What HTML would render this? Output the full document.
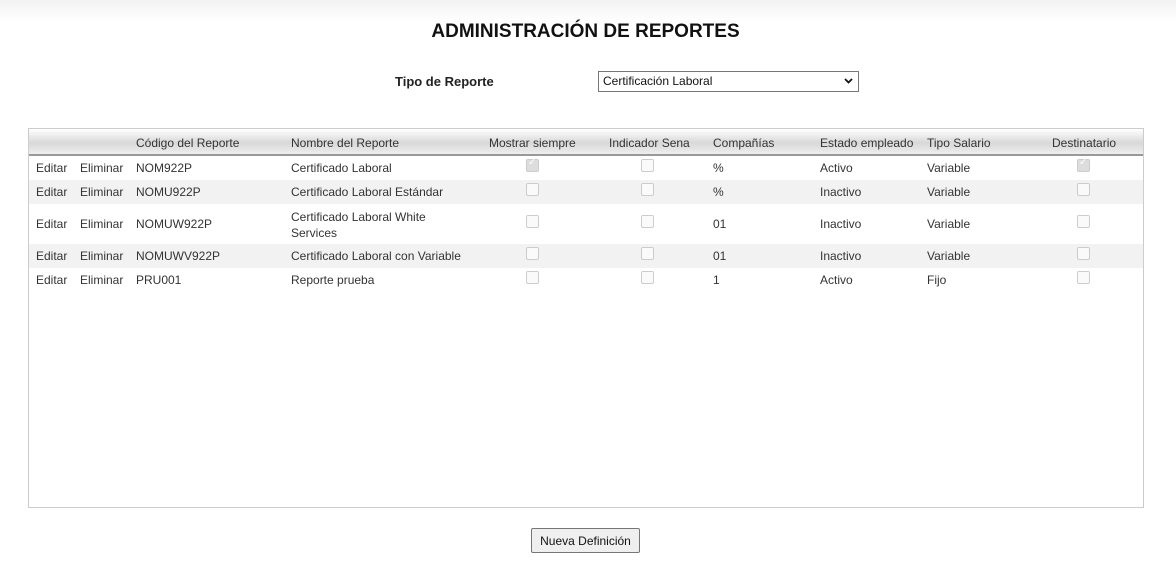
<!DOCTYPE html>
<html><head><meta charset="utf-8"><style>
body{margin:0;width:1176px;height:565px;background:#fff;font-family:"Liberation Sans",sans-serif;color:#333;position:relative;overflow:hidden}
.topg{position:absolute;left:0;top:0;width:1176px;height:22px;background:linear-gradient(#f2f2f2,#fff)}
.a{position:absolute;white-space:nowrap}
h1{position:absolute;left:0;width:1171px;top:21px;margin:0;text-align:center;font-size:19px;font-weight:bold;color:#111}
.box{position:absolute;left:28px;top:128px;width:1114px;height:378px;border:1px solid #ccc}
.hdr{position:absolute;left:0;top:0;width:1114px;height:25px;background:linear-gradient(#fff,#d8d8d8 55%,#eee);border-bottom:2px solid #999}
.row{position:absolute;left:0;width:1114px}
.g{background:#f2f2f2}
.c{position:absolute;font-size:12px;line-height:15px}
.cb{position:absolute;width:11px;height:11px;border:1px solid #ccc;border-radius:2px;background:#fafafa}
.cb.k{background:#ddd;border-color:#ccc}
.cb.k:after{content:"✓";position:absolute;left:1px;top:-3px;font-size:10px;color:#fff}
</style></head><body>
<div class="topg"></div>
<h1>ADMINISTRACIÓN DE REPORTES</h1>
<div class="a" style="left:395px;top:74px;font-size:13px;font-weight:bold;color:#222">Tipo de Reporte</div>
<div class="a" style="left:598px;top:71px;width:259px;height:19px;border:1px solid #767676;font-size:12px;line-height:19px;color:#111"><span style="margin-left:4px">Certificación Laboral</span><svg style="position:absolute;right:5px;top:6px" width="9" height="6" viewBox="0 0 9 6"><path d="M1 1L4.5 4.5L8 1" stroke="#111" stroke-width="1.8" fill="none"/></svg></div>
<div class="box">
<div class="hdr">
<div class="c" style="left:107px;top:7px">Código del Reporte</div>
<div class="c" style="left:262px;top:7px">Nombre del Reporte</div>
<div class="c" style="left:460px;top:7px">Mostrar siempre</div>
<div class="c" style="left:580px;top:7px">Indicador Sena</div>
<div class="c" style="left:684px;top:7px">Compañías</div>
<div class="c" style="left:791px;top:7px">Estado empleado</div>
<div class="c" style="left:898px;top:7px">Tipo Salario</div>
<div class="c" style="left:1023px;top:7px">Destinatario</div>
</div>
<div class="row" style="top:27px;height:24px">
<div class="c" style="left:7px;top:5px">Editar</div><div class="c" style="left:51px;top:5px">Eliminar</div><div class="c" style="left:107px;top:5px">NOM922P</div><div class="c" style="left:262px;top:5px">Certificado Laboral</div>
<div class="cb k" style="left:497px;top:3px"></div><div class="cb" style="left:612px;top:3px"></div>
<div class="c" style="left:684px;top:5px">%</div><div class="c" style="left:791px;top:5px">Activo</div><div class="c" style="left:898px;top:5px">Variable</div><div class="cb k" style="left:1048px;top:3px"></div></div>
<div class="row g" style="top:51px;height:24px">
<div class="c" style="left:7px;top:5px">Editar</div><div class="c" style="left:51px;top:5px">Eliminar</div><div class="c" style="left:107px;top:5px">NOMU922P</div><div class="c" style="left:262px;top:5px">Certificado Laboral Estándar</div>
<div class="cb" style="left:497px;top:3px"></div><div class="cb" style="left:612px;top:3px"></div>
<div class="c" style="left:684px;top:5px">%</div><div class="c" style="left:791px;top:5px">Inactivo</div><div class="c" style="left:898px;top:5px">Variable</div><div class="cb" style="left:1048px;top:3px"></div></div>
<div class="row" style="top:75px;height:40px">
<div class="c" style="left:7px;top:13px">Editar</div><div class="c" style="left:51px;top:13px">Eliminar</div><div class="c" style="left:107px;top:13px">NOMUW922P</div><div class="c" style="left:262px;top:5px;line-height:16px">Certificado Laboral White<br>Services</div>
<div class="cb" style="left:497px;top:11px"></div><div class="cb" style="left:612px;top:11px"></div>
<div class="c" style="left:684px;top:13px">01</div><div class="c" style="left:791px;top:13px">Inactivo</div><div class="c" style="left:898px;top:13px">Variable</div><div class="cb" style="left:1048px;top:11px"></div></div>
<div class="row g" style="top:115px;height:24px">
<div class="c" style="left:7px;top:5px">Editar</div><div class="c" style="left:51px;top:5px">Eliminar</div><div class="c" style="left:107px;top:5px">NOMUWV922P</div><div class="c" style="left:262px;top:5px">Certificado Laboral con Variable</div>
<div class="cb" style="left:497px;top:3px"></div><div class="cb" style="left:612px;top:3px"></div>
<div class="c" style="left:684px;top:5px">01</div><div class="c" style="left:791px;top:5px">Inactivo</div><div class="c" style="left:898px;top:5px">Variable</div><div class="cb" style="left:1048px;top:3px"></div></div>
<div class="row" style="top:139px;height:24px">
<div class="c" style="left:7px;top:5px">Editar</div><div class="c" style="left:51px;top:5px">Eliminar</div><div class="c" style="left:107px;top:5px">PRU001</div><div class="c" style="left:262px;top:5px">Reporte prueba</div>
<div class="cb" style="left:497px;top:3px"></div><div class="cb" style="left:612px;top:3px"></div>
<div class="c" style="left:684px;top:5px">1</div><div class="c" style="left:791px;top:5px">Activo</div><div class="c" style="left:898px;top:5px">Fijo</div><div class="cb" style="left:1048px;top:3px"></div></div>
</div>
<div class="a" style="left:531px;top:528px;width:107px;height:23px;border:1px solid #767676;background:#efefef;border-radius:2px;font-size:12px;line-height:24px;text-align:center;color:#111">Nueva Definición</div>
</body></html>
